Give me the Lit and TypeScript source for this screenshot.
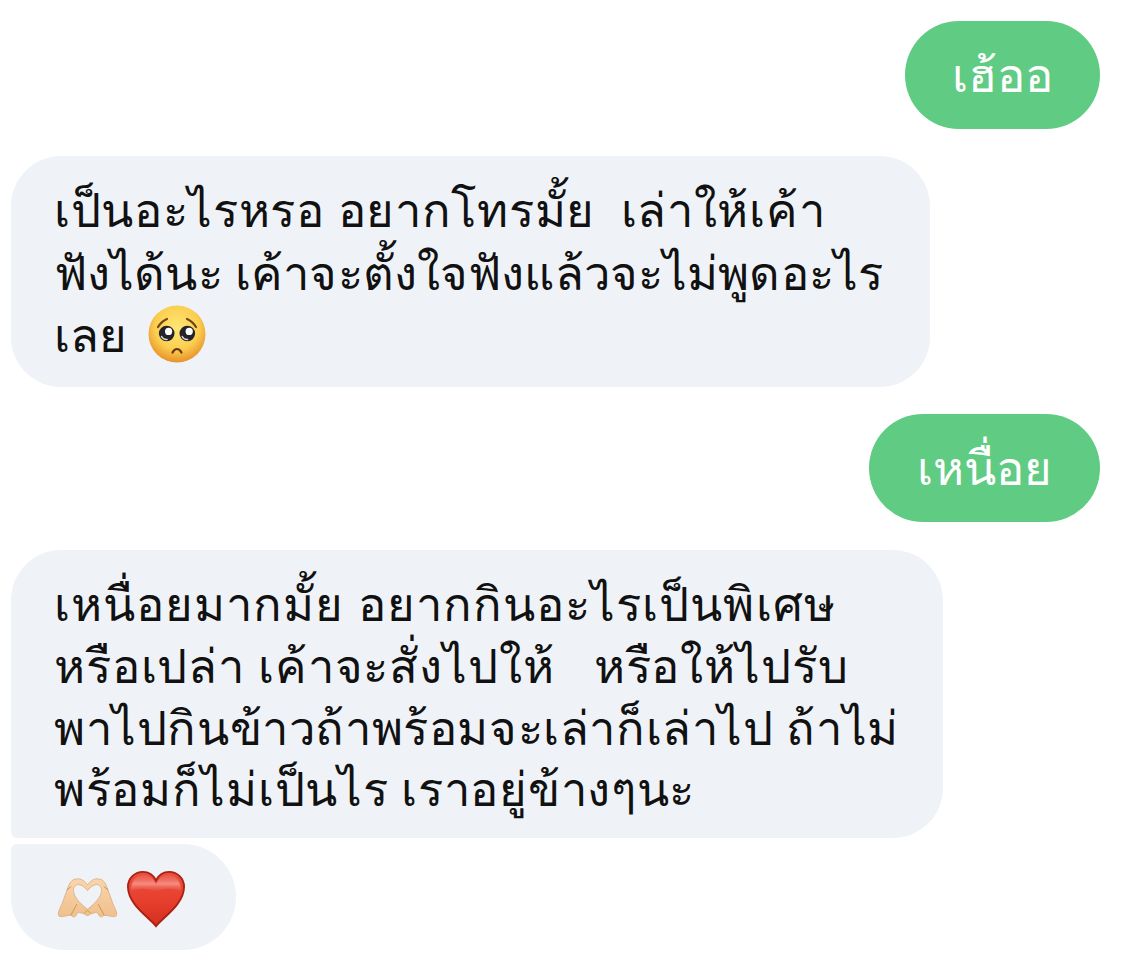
import { LitElement, html, css, svg } from "lit";
import { customElement } from "lit/decorators.js";

const pleading = svg`<svg class="emo-face" viewBox="0 0 60 60" width="60" height="60" aria-hidden="true">
  <defs>
    <radialGradient id="fg" cx="50%" cy="38%" r="62%">
      <stop offset="0" stop-color="#ffe676"/><stop offset=".62" stop-color="#fbcf4f"/><stop offset="1" stop-color="#e8912a"/>
    </radialGradient>
  </defs>
  <circle cx="30" cy="30" r="28.5" fill="url(#fg)"/>
  <path d="M11 23C13.5 19 16.5 16.5 20 15" fill="none" stroke="#70431a" stroke-width="2.2" stroke-linecap="round"/>
  <path d="M49 23C46.5 19 43.5 16.5 40 15" fill="none" stroke="#70431a" stroke-width="2.2" stroke-linecap="round"/>
  <circle cx="19.7" cy="29.5" r="7.8" fill="#23232b"/>
  <circle cx="40.3" cy="29.5" r="7.8" fill="#23232b"/>
  <circle cx="21.6" cy="27.4" r="3.6" fill="#fff"/>
  <circle cx="42.2" cy="27.4" r="3.6" fill="#fff"/>
  <path d="M14.6 32.5a5.6 5.6 0 0 0 5.4 3" fill="none" stroke="#d9dbe4" stroke-width="1.5" stroke-linecap="round"/>
  <path d="M35.2 32.5a5.6 5.6 0 0 0 5.4 3" fill="none" stroke="#d9dbe4" stroke-width="1.5" stroke-linecap="round"/>
  <path d="M25.5 48.5C26.8 46 28.3 45 30 45C31.7 45 33.2 46 34.5 48.5" fill="none" stroke="#663615" stroke-width="2.2" stroke-linecap="round"/>
</svg>`;

const hands = svg`<svg class="emo-hands" viewBox="0 0 62 42" width="61" height="41" aria-hidden="true">
  <defs>
    <linearGradient id="hg" x1="0" y1="0" x2="0" y2="1">
      <stop offset="0" stop-color="#f9d5ad"/><stop offset="1" stop-color="#efc08c"/>
    </linearGradient>
  </defs>
  <path fill="url(#hg)" fill-rule="evenodd" stroke="#d4a472" stroke-width=".7" d="M31 7C28 3 24 0 20 1C16 1 14 3 12 7L5 26C3 31 1 34 1 37C1 40 4 40 8 39L14 38C16 41 19 40 20 37L22 35L28 37C30 39 32 39 34 37L40 35L42 37C43 40 46 41 48 38L54 39C58 40 61 40 61 37C61 34 59 31 57 26L50 7C48 3 46 1 42 1C38 0 34 3 31 7ZM31 13C34 9 38 6 42 7C46 9 46 13 44 18C41 24 35 29 31 32C27 29 21 24 18 18C16 13 16 9 20 7C24 6 28 9 31 13Z"/>
  <path d="M14 38L20 27M48 38L42 27M28 36L31 33L34 36M10 12L14 9M52 12L48 9" fill="none" stroke="#c9955f" stroke-width="1" stroke-linecap="round"/>
</svg>`;

const heart = svg`<svg class="emo-heart" viewBox="0 0 62 60" width="58" height="58" aria-hidden="true">
  <defs>
    <linearGradient id="hrt" x1="0" y1="0" x2="0" y2="1">
      <stop offset="0" stop-color="#e8503f"/><stop offset=".5" stop-color="#e8402f"/><stop offset="1" stop-color="#d2301e"/>
    </linearGradient>
    <linearGradient id="gl" x1="0" y1="0" x2="0" y2="1">
      <stop offset="0" stop-color="#f5695a" stop-opacity=".3"/><stop offset=".55" stop-color="#ffc4bb" stop-opacity=".55"/><stop offset="1" stop-color="#ff8878" stop-opacity="0"/>
    </linearGradient>
  </defs>
  <path d="M31 59C24 50 1 36 1 17C1 7 9 1 17 1C23 1 28 4 31 10C34 4 39 1 45 1C53 1 61 7 61 17C61 36 38 50 31 59Z" fill="url(#hrt)" stroke="#ab2214" stroke-width="2"/>
  <path d="M4 22C4 10 11 4 18 4C24 4 28 8 31 14C34 8 38 4 44 4C51 4 58 10 58 22C50 18 40 18 31 22C22 18 12 18 4 22Z" fill="url(#gl)"/>
</svg>`;

const first = [
  { t: "เป็นอะไรหรอ อยากโทรมั้ย  เล่าให้เค้า", ls: 0.68 },
  { t: "ฟังได้นะ เค้าจะตั้งใจฟังแล้วจะไม่พูดอะไร", ls: 0.12 },
];
const second = [
  { t: "เหนื่อยมากมั้ย อยากกินอะไรเป็นพิเศษ", ls: 1.05 },
  { t: "หรือเปล่า เค้าจะสั่งไปให้   หรือให้ไปรับ", ls: 0.85 },
  { t: "พาไปกินข้าวถ้าพร้อมจะเล่าก็เล่าไป ถ้าไม่", ls: 0.6 },
  { t: "พร้อมก็ไม่เป็นไร เราอยู่ข้างๆนะ", ls: 0.7 },
];
const line = (l: { t: string; ls: number }) =>
  html`<div style="letter-spacing:${l.ls}px">${l.t}</div>`;

@customElement("app-root")
export class AppRoot extends LitElement {
  static styles = css`
    :host { display: block; width: 1136px; height: 980px; background: #fff; overflow: hidden;
      font-family: "Noto Sans", "Liberation Sans", "DejaVu Sans", sans-serif; color: #111; }
    .col { display: flex; flex-direction: column; padding: 21px 36px 0 11px; }
    .b { font-size: 47.2px; white-space: pre; box-sizing: border-box; }
    .me { align-self: flex-end; background: #5fcb83; color: #fff; border-radius: 54px; height: 108px; padding: 0 47px; display: flex; align-items: center; }
    .me.wide { padding: 0 48px; margin-top: 27px; }
    .them { align-self: flex-start; background: #eff3f8; border-radius: 50px; padding-left: 43px; padding-right: 47px; }
    .one { margin-top: 27px; padding-top: 22px; padding-bottom: 21px; line-height: 62.7px; }
    .two { margin-top: 28px; padding-top: 23px; padding-bottom: 18px; padding-right: 44px; line-height: 61.7px; border-bottom-left-radius: 6px; }
    .three { margin-top: 6px; border-radius: 6px 53px 53px 53px; height: 106px; padding: 0 51px 0 46px; display: flex; align-items: center; gap: 9px; }
    .last-line { height: 62.7px; }
    .emo-face { vertical-align: -12px; margin-left: 8px; }
    .emo-hands { margin-top: 4px; }
    .emo-heart { margin-top: 5px; }
  `;
  render() {
    return html`<div class="col">
      <div class="b me">เฮ้ออ</div>
      <div class="b them one">${first.map(line)}<div class="last-line">เลย ${pleading}</div></div>
      <div class="b me wide">เหนื่อย</div>
      <div class="b them two">${second.map(line)}</div>
      <div class="b them three">${hands}${heart}</div>
    </div>`;
  }
}
